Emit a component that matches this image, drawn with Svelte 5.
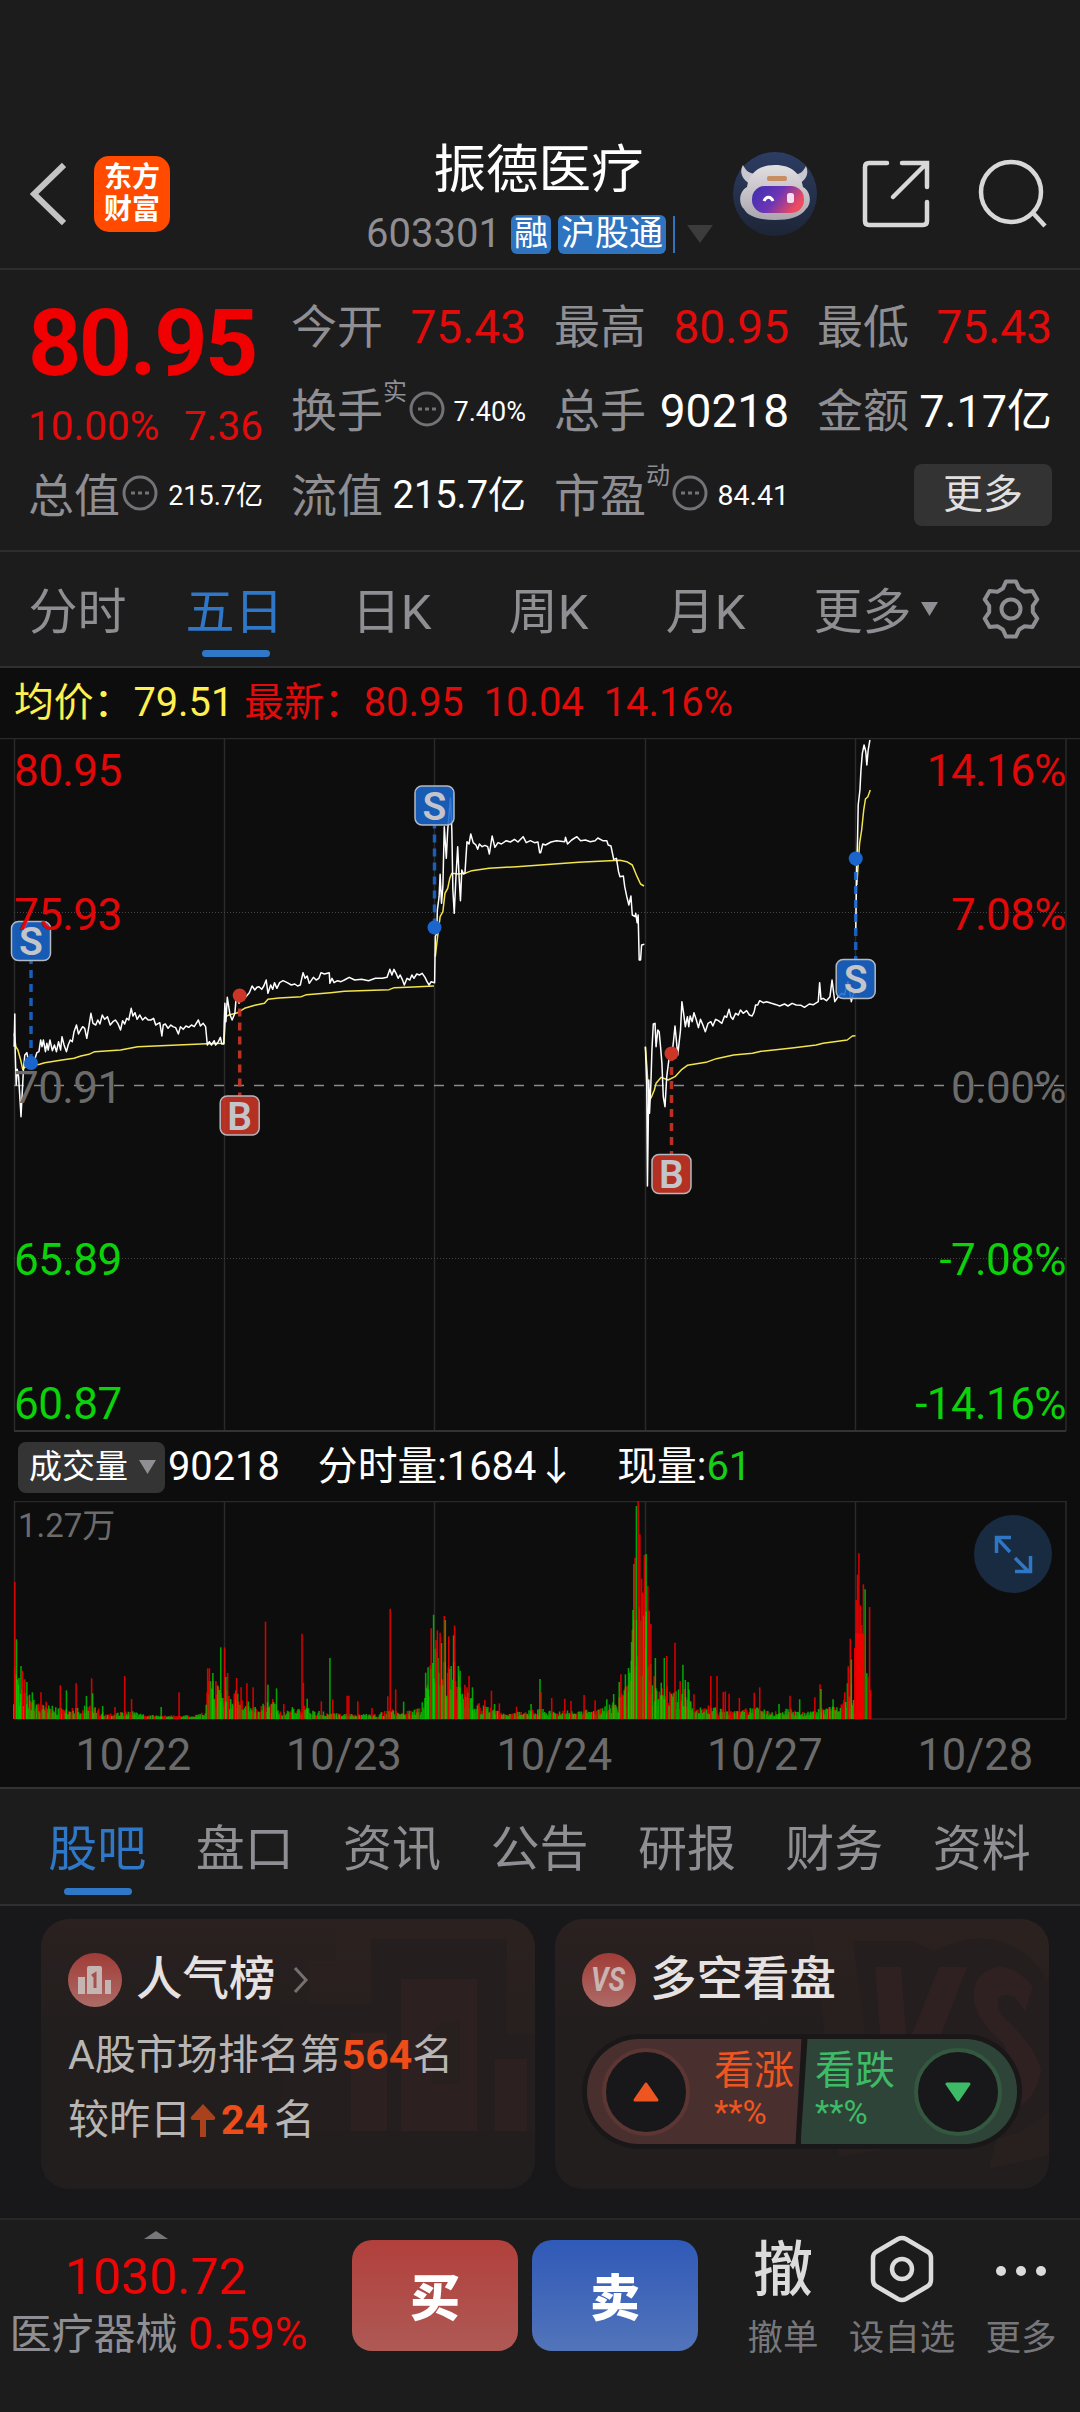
<script>
    const periods = ["分时", "五日", "日K", "周K", "月K", "更多"];
    const sections = ["股吧", "盘口", "资讯", "公告", "研报", "财务", "资料"];
    const dates = ["10/22", "10/23", "10/24", "10/27", "10/28"];

    let activePeriod = "五日";
    let activeSection = "股吧";

    // one polyline per trading session, chart units
    const priceLines = [
        "41,950 43,852 44,960 47,1065 50,1018 54,1040 61,1160 68,1020 72,975 78,968 84,1000 88,985 92,1010 98,990 102,985 107,968 113,965 118,930 122,950 126,930 132,965 136,940 140,960 145,930 152,962 158,945 164,965 170,935 176,960 180,920 186,945 193,965 198,945 204,930 210,935 215,905 222,885 228,912 234,900 240,890 246,895 252,925 258,890 264,850 270,880 278,885 284,870 290,882 297,855 304,868 312,860 320,885 328,875 335,870 342,880 350,900 356,872 362,882 368,865 374,870 381,835 386,858 392,848 398,868 406,855 414,870 422,862 430,870 438,870 446,865 452,885 460,880 464,878 470,918 474,885 480,882 488,895 496,885 502,890 510,893 518,912 524,890 532,898 540,888 548,892 556,885 564,890 576,870 582,888 590,880 597,890 602,945 608,935 614,945 622,932 626,945 634,935 640,922 644,942 650,942 651,880 653,820 656,875 660,802 668,855 674,870 682,850 686,800 694,820 700,790 706,810 714,800 724,788 732,768 740,780 746,772 752,770 760,778 766,768 773,750 778,790 786,765 792,778 797,758 804,775 812,758 822,752 834,758 846,765 856,762 864,768 872,765 880,728 886,745 892,738 898,760 910,742 918,750 926,745 932,728 942,732 956,728 958,760 964,745 970,758 980,752 990,755 1000,750 1014,742 1030,750 1050,748 1070,752 1090,745 1110,745 1124,742 1132,718 1138,735 1144,718 1150,730 1156,745 1162,735 1168,748 1174,765 1182,745 1190,750 1196,735 1202,745 1210,732 1218,735 1226,730 1234,742 1240,755 1246,765 1252,755 1262,758 1264,620 1268,610 1270,540 1275,500 1278,433 1282,520 1286,470 1290,290 1296,385 1300,300 1308,205 1312,300 1315,480 1319,550 1324,440 1329,350 1333,440 1337,512 1341,420 1346,432 1350,430 1356,335 1362,342 1367,312 1374,338 1382,345 1387,358 1392,342 1400,350 1408,346 1416,350 1421,372 1429,318 1437,352 1446,338 1456,342 1470,332 1482,336 1494,328 1504,336 1519,320 1528,338 1540,332 1552,338 1562,336 1567,368 1570,368 1576,342 1584,345 1600,336 1616,332 1640,335 1642,322 1648,342 1660,330 1675,320 1686,332 1700,330 1714,335 1728,332 1736,324 1750,332 1762,332 1766,345 1774,348 1782,388 1790,385 1796,425 1800,440 1810,438 1814,470 1820,500 1826,525 1832,498 1836,555 1844,560 1846,550 1850,578 1853,555 1856,690 1860,690 1863,645 1871,643",
        "1874,950 1878,1070 1880,1368 1884,1050 1886,1150 1890,1060 1893,960 1897,882 1902,880 1905,950 1910,900 1914,905 1918,950 1922,1000 1926,1100 1931,1130 1936,1040 1944,975 1950,985 1956,930 1960,888 1968,975 1976,900 1980,815 1985,850 1990,890 1996,860 2000,890 2004,858 2010,875 2015,848 2022,870 2028,893 2034,868 2041,885 2048,905 2056,880 2064,875 2070,888 2078,868 2086,872 2096,880 2104,858 2110,862 2117,838 2122,860 2128,868 2136,850 2144,855 2150,840 2158,850 2168,842 2176,855 2184,858 2190,845 2194,825 2200,825 2206,812 2216,818 2226,815 2240,820 2254,824 2264,828 2278,822 2288,828 2300,820 2312,825 2326,826 2336,832 2350,822 2362,824 2376,815 2380,758 2384,808 2390,805 2400,812 2410,800 2416,750 2424,815 2434,800 2444,790 2452,795 2462,755 2466,778 2472,815 2478,790 2484,790",
        "2485,600 2487,430 2490,330 2492,225 2497,180 2500,120 2504,70 2509,45 2514,65 2517,105 2521,60 2526,30",
    ];
    const averageLines = [
        "41,910 46,950 52,960 60,990 66,1018 74,1010 90,1008 115,1003 130,998 180,990 215,985 235,978 258,973 275,965 350,960 400,950 500,946 600,941 650,940 655,860 665,855 690,848 710,835 740,826 768,820 778,808 810,804 875,800 890,794 960,788 1000,784 1130,779 1145,773 1200,771 1260,768",
        "1264,680 1270,625 1278,560 1286,545 1292,490 1300,475 1306,445 1312,430 1330,432 1350,430 1370,422 1420,415 1500,410 1570,405 1680,397 1800,391 1820,395 1836,405 1850,440 1860,462 1870,468",
        "1874,950 1879,1020 1884,1116 1892,1100 1900,1080 1905,1060 1920,1042 1940,1050 1960,1040 1980,1018 1996,1006 2050,997 2080,986 2130,975 2185,970 2210,964 2300,954 2370,945 2390,940 2460,930 2475,918 2484,917",
        "2488,465 2492,400 2496,340 2502,300 2508,240 2513,207 2520,200 2527,180",
    ];

    const trades = [
        { side: "S", x: 31, box: 203, dot: 325 },
        { side: "B", x: 239.7, box: 377.5, dot: 257.5 },
        { side: "S", x: 434.5, box: 67.5, dot: 189.5 },
        { side: "B", x: 671.5, box: 436, dot: 315.5 },
        { side: "S", x: 855.7, box: 241, dot: 120.5 },
    ];

    const axis = [
        { price: "80.95", pct: "14.16%", y: 48, tone: "up" },
        { price: "75.93", pct: "7.08%", y: 192, tone: "up" },
        { price: "70.91", pct: "0.00%", y: 364.5, tone: "flat" },
        { price: "65.89", pct: "-7.08%", y: 537, tone: "down" },
        { price: "60.87", pct: "-14.16%", y: 681, tone: "down" },
    ];

    // typical volume over time, the noise is scaled by it
    const envelope = [
        [38, 170], [50, 130], [80, 80], [110, 45], [180, 32], [270, 40], [310, 12], [380, 22],
        [420, 10], [560, 8], [596, 20], [604, 120], [650, 110], [700, 75], [745, 30], [790, 60],
        [820, 18], [880, 40], [920, 22], [980, 14], [1100, 12], [1130, 35], [1160, 16], [1220, 30],
        [1240, 170], [1265, 240], [1320, 220], [1345, 90], [1400, 40], [1470, 14], [1570, 30],
        [1600, 22], [1740, 26], [1790, 55], [1825, 110], [1838, 330], [1855, 440], [1876, 330],
        [1892, 140], [1920, 100], [2000, 90], [2014, 26], [2060, 40], [2120, 22], [2200, 34],
        [2240, 18], [2290, 30], [2330, 18], [2440, 40], [2465, 130], [2474, 110], [2482, 30],
    ];
    const spikes = [
        [43, 276, "r"], [48, 448, "g"], [55, 564, "g"], [61, 528, "g"], [65, 542, "r"], [72, 568, "r"], [78, 576, "g"],
        [94, 607, "g"], [119, 607, "r"], [134, 635, "r"], [175, 586, "r"], [193, 601, "g"], [221, 580, "r"],
        [251, 618, "g"], [266, 565, "r"], [269, 610, "g"], [298, 648, "g"], [334, 651, "r"], [362, 558, "r"],
        [382, 627, "r"], [468, 651, "g"], [520, 607, "r"], [603, 535, "r"], [608, 535, "r"], [618, 549, "g"],
        [627, 573, "r"], [641, 472, "g"], [652, 472, "r"], [656, 561, "g"], [661, 549, "r"], [687, 564, "r"],
        [700, 592, "r"], [717, 580, "r"], [735, 592, "r"], [771, 395, "r"], [778, 584, "g"], [803, 595, "g"],
        [824, 642, "r"], [849, 651, "g"], [877, 431, "r"], [881, 578, "r"], [892, 626, "g"], [933, 634, "r"],
        [958, 504, "g"], [966, 628, "r"], [1008, 617, "r"], [1013, 617, "r"], [1039, 634, "r"], [1080, 654, "r"],
        [1126, 619, "r"], [1133, 356, "r"], [1149, 598, "r"], [1172, 635, "g"], [1236, 548, "g"], [1243, 532, "g"],
        [1252, 415, "r"], [1259, 374, "g"], [1266, 450, "r"], [1270, 421, "r"], [1278, 428, "r"], [1290, 378, "r"],
        [1293, 390, "g"], [1303, 439, "r"], [1317, 436, "g"], [1320, 407, "r"], [1331, 528, "g"], [1336, 542, "g"],
        [1350, 584, "r"], [1356, 592, "r"], [1362, 558, "r"], [1372, 592, "g"], [1408, 630, "r"], [1427, 602, "r"],
        [1436, 642, "g"], [1450, 640, "r"], [1500, 650, "r"], [1542, 642, "g"], [1568, 567, "g"], [1571, 606, "r"],
        [1602, 624, "r"], [1640, 626, "r"], [1658, 633, "r"], [1696, 615, "r"], [1728, 631, "r"], [1762, 628, "g"],
        [1782, 612, "g"], [1798, 576, "g"], [1803, 553, "r"], [1816, 553, "g"], [1825, 534, "g"], [1834, 456, "g"],
        [1838, 360, "g"], [1841, 222, "g"], [1844, 203, "r"], [1848, 48, "g"], [1853, 33, "r"], [1858, 133, "r"],
        [1863, 266, "r"], [1871, 195, "r"], [1876, 192, "g"], [1881, 288, "r"], [1885, 362, "r"], [1890, 402, "r"],
        [1903, 504, "g"], [1920, 578, "g"], [1929, 504, "g"], [1936, 498, "r"], [1960, 458, "r"], [1975, 573, "r"],
        [1983, 524, "g"], [1990, 570, "g"], [1998, 576, "g"], [2015, 613, "r"], [2064, 558, "r"], [2082, 558, "r"],
        [2100, 606, "r"], [2106, 604, "r"], [2117, 611, "r"], [2147, 624, "r"], [2190, 608, "r"], [2206, 592, "r"],
        [2262, 642, "g"], [2294, 617, "r"], [2322, 628, "g"], [2366, 622, "r"], [2381, 583, "r"], [2384, 597, "g"],
        [2419, 628, "g"], [2463, 529, "r"], [2469, 446, "r"], [2472, 508, "g"], [2482, 474, "r"], [2486, 330, "r"],
        [2490, 254, "r"], [2494, 190, "r"], [2498, 346, "r"], [2502, 405, "r"], [2507, 283, "r"], [2512, 298, "g"],
        [2517, 550, "g"], [2520, 560, "r"], [2525, 351, "r"], [2528, 600, "r"],
    ];

    function typicalVolume(x) {
        for (let i = 1; i < envelope.length; i++) {
            const [x0, h0] = envelope[i - 1];
            const [x1, h1] = envelope[i];
            if (x <= x1) return h0 + ((h1 - h0) * (x - x0)) / (x1 - x0);
        }
        return 0;
    }

    function buildVolume() {
        const bars = { r: "", g: "" };
        let seed = 41;
        const random = () => {
            seed = (seed * 16807) % 2147483647;
            return seed / 2147483647;
        };
        for (let x = 40; x < 2482; x += 2.54) {
            const height = typicalVolume(x) * (0.25 + random() * 0.75) + 3;
            bars[random() > 0.52 ? "r" : "g"] += `M${x.toFixed(1)} 687v${-height.toFixed(1)}`;
        }
        return bars;
    }

    function gearPath(cx, cy) {
        const points = [];
        for (let i = 0; i < 6; i++) {
            for (const [offset, r] of [[-22, 22], [-10, 28], [10, 28], [22, 22]]) {
                const a = ((i * 60 - 90 + offset) * Math.PI) / 180;
                points.push(`${(cx + r * Math.cos(a)).toFixed(1)} ${(cy + r * Math.sin(a)).toFixed(1)}`);
            }
        }
        return `M${points.join("L")}Z`;
    }

    const volume = buildVolume();
</script>

{#snippet info()}
    <svg class="info" viewBox="0 0 36 36">
        <circle cx="18" cy="18" r="16" />
        <path d="M9 18h4M16 18h4M23 18h4" />
    </svg>
{/snippet}

<main>
    <header>
        <div class="side left">
            <svg class="back" viewBox="0 0 36 64"><path d="M34 3 4 32l30 29" /></svg>
            <div class="logo"><span>东方</span><span>财富</span></div>
        </div>
        <div class="title">
            <h1>振德医疗</h1>
            <div class="code">
                <span>603301</span>
                <b>融</b>
                <b>沪股通</b>
                <i></i>
                <svg viewBox="0 0 26 18"><path d="M0 0h26L13 18z" /></svg>
            </div>
        </div>
        <div class="side right">
            <svg class="robot" viewBox="0 0 84 84">
                <defs>
                    <linearGradient id="visor" x1="0" x2="1" y1="0" y2=".4">
                        <stop offset="0" stop-color="#3a2fb0" />
                        <stop offset=".55" stop-color="#6d35b5" />
                        <stop offset="1" stop-color="#ee4a60" />
                    </linearGradient>
                    <linearGradient id="space" x1="0" x2="0" y1="0" y2="1">
                        <stop offset="0" stop-color="#2c3d63" />
                        <stop offset="1" stop-color="#1d2536" />
                    </linearGradient>
                    <linearGradient id="fur" x1="0" x2="0" y1="0" y2="1">
                        <stop offset="0" stop-color="#e2dfe2" />
                        <stop offset="1" stop-color="#aaa5ae" />
                    </linearGradient>
                </defs>
                <circle cx="42" cy="42" r="42" fill="url(#space)" />
                <path d="M17 32C9 27 6 20 10 13c3 6 6 8 12 9zM66 32c8-5 10-11 7-18-3 6-6 8-12 9z" fill="#c9c7cf" />
                <path d="M42 13c17 0 26 9 28 22 8 4 9 17 3 22-5 8-17 11-31 11s-27-3-31-11c-6-5-5-18 3-22 2-13 11-22 28-22z" fill="url(#fur)" />
                <rect x="19" y="34" width="52" height="27" rx="13" fill="url(#visor)" />
                <rect x="34" y="24" width="20" height="5" rx="2" fill="#c98d62" />
                <path d="M31 49c2-5 7-5 9 0" fill="none" stroke="#fff" stroke-width="3" />
                <rect x="54" y="41" width="7" height="10" rx="2.5" fill="#f3dff0" />
            </svg>
            <svg class="share" viewBox="0 0 68 68">
                <path d="M25 3H7q-4 0-4 4v54q0 4 4 4h54q4 0 4-4V42M40 3h25v24M64 4 31 37" />
            </svg>
            <svg class="search" viewBox="0 0 70 70">
                <circle cx="33" cy="33" r="30" />
                <path d="m55 54 12 13" />
            </svg>
        </div>
    </header>

    <section class="quote">
        <div class="price">
            <strong>80.95</strong>
            <p><span>10.00%</span><span>7.36</span></p>
        </div>
        <div class="cell"><label>今开</label><em class="red">75.43</em></div>
        <div class="cell"><label>最高</label><em class="red">80.95</em></div>
        <div class="cell"><label>最低</label><em class="red">75.43</em></div>
        <div class="cell"><label>换手</label><sup>实</sup>{@render info()}<em class="small">7.40%</em></div>
        <div class="cell"><label>总手</label><em>90218</em></div>
        <div class="cell"><label>金额</label><em class="amount">7.17亿</em></div>
        <div class="cell"><label>总值</label>{@render info()}<em class="small">215.7亿</em></div>
        <div class="cell"><label>流值</label><em class="medium">215.7亿</em></div>
        <div class="cell"><label>市盈</label><sup>动</sup>{@render info()}<em class="small ratio">84.41</em></div>
        <div class="cell"><button class="more">更多</button></div>
    </section>

    <nav class="periods">
        {#each periods as period, i}
            <button class:active={period == activePeriod} on:click={() => (activePeriod = period)}>
                {period}
                {#if i == periods.length - 1}
                    <svg class="caret" viewBox="0 0 17 14"><path d="M0 0h17L8.500 14z" /></svg>
                {/if}
            </button>
        {/each}
        <svg class="gear" viewBox="0 0 60 60">
            <path d={gearPath(30, 30)} />
            <circle cx="30" cy="30" r="9.500" />
        </svg>
    </nav>

    <section class="charts">
        <div class="legend">
            <span class="yellow">均价：79.51</span>
            <span>最新：80.95</span>
            <span>10.04</span>
            <span>14.16%</span>
        </div>

        <svg class="priceChart" viewBox="0 0 1080 695">
            <g class="grid">
                <path d="M0 .5H1080" />
                <path d="M14.500 0V693M224.500 0V693M434.500 0V693M645.500 0V693M855.500 0V693M1066 0V693" />
                <path class="dotted" d="M14 174.500H1066M14 520.500H1066" />
                <path class="bottom" d="M14 693H1066" />
            </g>
            <path class="zero" d="M14 347.500H1066" />
            <svg x="0" y="0" width="1080" height="693" viewBox="0 24 3136 2079" preserveAspectRatio="none">
                {#each averageLines as points}
                    <polyline class="average" {points} />
                {/each}
                {#each priceLines as points}
                    <polyline class="last" {points} />
                {/each}
            </svg>
            {#each trades as trade}
                <g class="trade {trade.side}">
                    <line x1={trade.x} x2={trade.x} y1={trade.box + (trade.box < trade.dot ? 20 : -20)} y2={trade.dot} />
                    <circle cx={trade.x} cy={trade.dot} r="7" />
                    <rect x={trade.x - 19.5} y={trade.box - 19.5} width="39" height="39" rx="7" />
                    <text x={trade.x} y={trade.box + 14}>{trade.side}</text>
                </g>
            {/each}
            {#each axis as row}
                <text class="tick {row.tone}" x="14" y={row.y}>{row.price}</text>
                <text class="tick end {row.tone}" x="1066" y={row.y}>{row.pct}</text>
            {/each}
        </svg>

        <div class="legend volumeLegend">
            <button class="pill">
                成交量
                <svg viewBox="0 0 17 14"><path d="M0 0h17L8.500 14z" /></svg>
            </button>
            <span>90218</span>
            <span class="minute">分时量:1684↓</span>
            <span>现量:<i>61</i></span>
        </div>

        <svg class="volumeChart" viewBox="0 0 1080 220">
            <path class="frame" d="M14 .5H1066M14.500 0V218M224.500 0V218M434.500 0V218M645.500 0V218M855.500 0V218M1066 0V218M14 218H1066" />
            <svg x="0" y="0" width="1080" height="218" viewBox="0 33 3136 654" preserveAspectRatio="none">
                <path class="bar r" d={volume.r} />
                <path class="bar g" d={volume.g} />
                {#each spikes as [x, top, tone]}
                    <path class="bar {tone}" d="M{x} 687V{top}" />
                {/each}
                <rect x="2484" y="430" width="26" height="257" fill="#ee0000" />
            </svg>
            <text x="18" y="36">1.27万</text>
            <circle class="expand" cx="1013" cy="53" r="39" />
            <path class="arrows" d="M1011 36.500H996.500V52M997 37l13 14M1015 57l14 14M1030.500 55V70.500H1015" />
        </svg>

        <div class="dates">
            {#each dates as date}
                <span>{date}</span>
            {/each}
        </div>
    </section>

    <nav class="sections">
        {#each sections as section}
            <button class:active={section == activeSection} on:click={() => (activeSection = section)}>{section}</button>
        {/each}
    </nav>

    <section class="cards">
        <article>
            <svg class="ghost" viewBox="0 0 494 270">
                <path d="M295 0H494V212H240V85h28V42h27z" fill="#2c2220" opacity=".5" />
                <path d="M330 20h136v95h28v97H240V85h90z" fill="#251e1e" />
                <path d="M360 60h76v152h-76zM310 114h36v98h-36zM454 140h32v72h-32z" fill="#2c2020" />
                <path d="m391 112 12-9h16v62h-28z" fill="#281f1f" />
            </svg>
            <h2>
                <svg class="badge" viewBox="0 0 54 54">
                    <defs>
                        <linearGradient id="badge" x1="0" x2="0" y1="0" y2="1">
                            <stop offset="0" stop-color="#a03c37" />
                            <stop offset="1" stop-color="#ad6b67" />
                        </linearGradient>
                    </defs>
                    <circle cx="27" cy="27" r="27" fill="url(#badge)" />
                    <path d="M10 24h7v17h-7zM19 15q0-2 2-2h11q2 0 2 2v26H19zM37 27h6v14h-6z" fill="#c4b4b2" />
                    <path d="m24 23 3-2v14" fill="none" stroke="#a4504b" stroke-width="3" />
                </svg>
                人气榜
                <svg class="chevron" viewBox="0 0 16 28"><path d="m2 2 11 12L2 26" /></svg>
            </h2>
            <p>A股市场排名第<b>564</b>名</p>
            <p>
                较昨日<svg class="rise" viewBox="0 0 26 34"><path d="M13 0 25 13q1 3-2 3H16v17h-6V16H3q-3 0-2-3z" /></svg><b>24</b>
                名
            </p>
        </article>
        <article>
            <svg class="ghost" viewBox="0 0 494 270">
                <path d="M256 0H494V236l-60 14 10-40-160 28z" fill="#2c2220" opacity=".4" />
                <path d="M298 22h60l20 10q60-30 100 10l16 20v130q-30 30-80 30h-90z" fill="#251e1e" />
                <path d="M320 48h26l6 80 32-80h28l-50 130h-32zM478 68q-28-34-54-10-18 30 24 66 10 16-12 34-16 12-30 2v28q70 20 80-36-4-24-40-56-10-26 14-18l10 14z" fill="#2f2121" />
            </svg>
            <h2>
                <svg class="badge" viewBox="0 0 54 54">
                    <circle cx="27" cy="27" r="27" fill="url(#badge)" />
                    <text x="26" y="38" textLength="34" lengthAdjust="spacingAndGlyphs">VS</text>
                </svg>
                多空看盘
            </h2>
            <div class="vote">
                <div class="bull">
                    <span class="knob"><svg viewBox="0 0 26 20"><path d="M13 2 24 18H2z" /></svg></span>
                    <div><span>看涨</span><small>**%</small></div>
                </div>
                <div class="bear">
                    <div><span>看跌</span><small>**%</small></div>
                    <span class="knob"><svg viewBox="0 0 26 20"><path d="M2 2h22L13 18z" /></svg></span>
                </div>
            </div>
        </article>
    </section>

    <footer>
        <div class="index">
            <svg viewBox="0 0 24 8"><path d="M12 0 24 8H0z" /></svg>
            <strong>1030.72</strong>
            <p>医疗器械 <span>0.59%</span></p>
        </div>
        <button class="trade-btn buy">买</button>
        <button class="trade-btn sell">卖</button>
        <div class="action cancel"><b>撤</b><span>撤单</span></div>
        <div class="action favourite">
            <svg viewBox="0 0 64 68">
                <path d="M28 4q4-2 8 0l22 13q3 2 3 6v22q0 4-3 6L36 64q-4 2-8 0L6 51q-3-2-3-6V23q0-4 3-6z" />
                <circle cx="32" cy="34" r="10" />
            </svg>
            <span>设自选</span>
        </div>
        <div class="action">
            <svg class="dots" viewBox="0 0 64 68">
                <circle cx="12" cy="36" r="5" /><circle cx="32" cy="36" r="5" /><circle cx="52" cy="36" r="5" />
            </svg>
            <span>更多</span>
        </div>
    </footer>
</main>

<style>
    :global(body) {
        background: #1c1c1c;
    }
    main {
        display: flex;
        flex-direction: column;
        width: 1080px;
        height: 2412px;
        overflow: hidden;
        background: #1c1c1c;
        color: #fff;
        font-family: Roboto, "Noto Sans CJK SC", sans-serif;
        line-height: 1.2;
    }
    main * {
        box-sizing: border-box;
    }
    svg {
        display: block;
        flex: none;
    }
    button {
        padding: 0;
        border: 0;
        background: none;
        color: inherit;
        font: inherit;
    }
    h1,
    h2,
    p {
        margin: 0;
        font-weight: 400;
    }
    em,
    i {
        font-style: normal;
    }

    /* header */
    header {
        display: flex;
        justify-content: space-between;
        height: 270px;
        padding: 134px 32px 0 30px;
        border-bottom: 2px solid #2d2d2d;
    }
    .side {
        display: flex;
        align-items: center;
        width: 336px;
        height: 120px;
    }
    .right {
        justify-content: flex-end;
    }
    .back {
        width: 36px;
        height: 64px;
        fill: none;
        stroke: #c4c4c4;
        stroke-width: 6;
    }
    .logo {
        display: flex;
        flex-direction: column;
        justify-content: center;
        width: 76px;
        height: 76px;
        margin-left: 28px;
        border-radius: 15px;
        background: #ff4a00;
        font-size: 28px;
        font-weight: 700;
        line-height: 32px;
        text-align: center;
    }
    .title {
        display: flex;
        flex: 1;
        flex-direction: column;
        align-items: center;
        padding-top: 3px;
    }
    h1 {
        margin-left: -1px;
        font-size: 52.5px;
        line-height: 66px;
    }
    .code {
        display: flex;
        align-items: center;
        gap: 7px;
        margin: 11px 0 0 1px;
        color: #8e8e93;
        font-size: 40px;
        line-height: 40px;
        white-space: nowrap;
    }
    .code span {
        margin-right: 3px;
    }
    .code b {
        height: 39px;
        padding: 0 3px;
        border-radius: 6px;
        background: #2f74c0;
        color: #fff;
        font-size: 34px;
        font-weight: 400;
        line-height: 37px;
    }
    .code i {
        width: 2px;
        height: 37px;
        background: #2f74c0;
    }
    .code svg {
        width: 26px;
        margin-left: 5px;
        fill: #3c3c3c;
    }
    .robot {
        width: 84px;
    }
    .share {
        width: 68px;
        margin-left: 45px;
        fill: none;
        stroke: #d8d8d8;
        stroke-width: 4.500;
        stroke-linecap: round;
    }
    .search {
        width: 70px;
        margin-left: 48px;
        fill: none;
        stroke: #d8d8d8;
        stroke-width: 4.500;
    }

    /* quote */
    .quote {
        display: grid;
        grid-template-columns: repeat(4, 1fr);
        grid-template-rows: repeat(3, 84.5px);
        column-gap: 28px;
        height: 280px;
        padding: 15px 28px 0;
    }
    .price {
        grid-row: span 2;
        color: #e00b0b;
    }
    .price strong {
        display: block;
        height: 112px;
        color: #f00000;
        font-size: 93px;
        font-weight: 700;
        line-height: 117px;
        letter-spacing: -2.5px;
    }
    .price p {
        display: flex;
        justify-content: space-between;
        font-size: 40.5px;
        line-height: 58px;
    }
    .cell {
        display: flex;
        align-items: center;
        font-size: 46px;
        white-space: nowrap;
    }
    .cell label {
        color: #8e8e93;
    }
    .cell em {
        margin-left: auto;
    }
    .cell .red {
        color: #e00b0b;
    }
    .cell .amount {
        font-size: 45px;
    }
    .cell .medium {
        font-size: 38px;
    }
    .cell .small {
        font-size: 27px;
    }
    .cell .ratio {
        font-size: 28.5px;
    }
    .cell sup {
        align-self: flex-start;
        margin-top: 2px;
        color: #8e8e93;
        font-size: 24px;
        line-height: 40px;
    }
    .info {
        width: 36px;
        margin: -6px 0 0 2px;
        fill: none;
        stroke: #737377;
        stroke-width: 3;
    }
    .more {
        width: 138px;
        height: 62px;
        margin: -3px 0 0 auto;
        border-radius: 8px;
        background: #333;
        color: #e0e0e0;
        font-size: 40px;
    }

    /* tabs */
    nav {
        display: flex;
        color: #8e8e93;
        font-size: 49px;
    }
    nav button {
        position: relative;
        line-height: 72px;
    }
    nav .active {
        color: #2f78c8;
    }
    nav .active::after {
        content: "";
        position: absolute;
        bottom: 9px;
        left: 50%;
        width: 68px;
        height: 7px;
        margin-left: -34px;
        border-radius: 4px;
        background: #2f78c8;
    }
    .periods {
        align-items: stretch;
        height: 118px;
        border-top: 2px solid #2d2d2d;
        border-bottom: 2px solid #303030;
    }
    .periods button {
        width: 157px;
        padding: 8px 2px 0 0;
    }
    .caret {
        position: absolute;
        top: 50px;
        right: 4px;
        width: 17px;
        fill: #8e8e93;
    }
    .gear {
        width: 60px;
        height: 60px;
        margin: 27px 0 0 39px;
        fill: none;
        stroke: #8e8e93;
        stroke-width: 4;
        stroke-linejoin: round;
    }
    .sections {
        height: 119px;
        padding: 0 24px;
        border-top: 2px solid #333;
        border-bottom: 2px solid #303030;
    }
    .sections button {
        flex: 1;
        padding: 7px 1px 0 0;
    }

    /* charts */
    .charts {
        height: 1119px;
        background: #0d0d0d;
    }
    .legend {
        display: flex;
        align-items: center;
        gap: 20px;
        height: 70px;
        padding-left: 14px;
        color: #e00b0b;
        font-size: 39.8px;
        white-space: nowrap;
    }
    .legend .yellow {
        margin-right: -9px;
        color: #fff050;
    }
    .priceChart {
        width: 1080px;
        height: 695px;
    }
    .grid path,
    .frame {
        fill: none;
        stroke: #2a2a2a;
        stroke-width: 1.500;
    }
    .grid .dotted {
        stroke-width: 1;
        stroke-dasharray: 1 2;
        stroke: #444;
    }
    .grid .bottom {
        stroke: #333;
        stroke-width: 2;
    }
    .zero {
        stroke: #8a8a8a;
        stroke-width: 1.600;
        stroke-dasharray: 10 10;
    }
    polyline {
        fill: none;
        stroke-width: 1.500;
        stroke-linejoin: round;
        vector-effect: non-scaling-stroke;
    }
    .average {
        stroke: #f2e44c;
    }
    .last {
        stroke: #fff;
    }
    .trade {
        --tone: #1a66cc;
    }
    .trade.B {
        --tone: #cc3626;
    }
    .trade line {
        stroke: var(--tone);
        stroke-width: 3.500;
        stroke-dasharray: 8 6;
        stroke-dashoffset: 5;
        opacity: 0.9;
    }
    .trade circle {
        fill: var(--tone);
    }
    .trade rect {
        fill: var(--tone);
        fill-opacity: 0.88;
        stroke: #b4b8bf;
        stroke-width: 1.500;
    }
    .trade text {
        fill: #c3c5ca;
        font-size: 39px;
        font-weight: 600;
        text-anchor: middle;
    }
    .tick {
        font-size: 44px;
        letter-spacing: -0.6px;
        fill: #6b6b6b;
    }
    .tick.end {
        text-anchor: end;
    }
    .tick.up {
        fill: #e00808;
    }
    .tick.down {
        fill: #0bd20b;
    }
    .volumeLegend {
        gap: 0;
        height: 68px;
        padding-left: 18px;
        color: #fff;
    }
    .pill {
        display: flex;
        align-items: center;
        gap: 11px;
        width: 147px;
        height: 51px;
        margin-right: 3px;
        padding-left: 11px;
        border-radius: 8px;
        background: #343434;
        font-size: 33px;
    }
    .pill svg {
        width: 17px;
        fill: #8e8e93;
    }
    .minute {
        margin: 0 41px 0 38px;
    }
    .legend i {
        color: #18cf18;
    }
    .volumeChart {
        width: 1080px;
        height: 220px;
    }
    .bar {
        stroke-width: 4.500;
    }
    .bar.r {
        stroke: #ee0000;
        opacity: 0.9;
    }
    .bar.g {
        stroke: #00d800;
        opacity: 0.75;
    }
    .volumeChart text {
        fill: #6b6b6b;
        font-size: 33px;
    }
    .expand {
        fill: #182b41;
    }
    .arrows {
        fill: none;
        stroke: #2f76c4;
        stroke-width: 3.500;
    }
    .dates {
        display: flex;
        padding-left: 28px;
        color: #6b6b6b;
        font-size: 43.5px;
        line-height: 70px;
    }
    .dates span {
        flex: none;
        width: 210.5px;
        text-align: center;
    }

    /* cards */
    .cards {
        display: flex;
        gap: 20px;
        height: 312px;
        padding: 13px 31px 0 41px;
        background: #18181a;
    }
    article {
        position: relative;
        width: 494px;
        height: 270px;
        padding: 32px 28px 0 27px;
        overflow: hidden;
        border-radius: 28px;
        background: linear-gradient(#2a2120, #231e1e 40%, #231e1e);
        color: #b8b5b5;
        font-size: 41px;
    }
    .ghost {
        position: absolute;
        inset: 0;
    }
    h2,
    article p,
    .vote {
        position: relative;
    }
    h2 {
        display: flex;
        align-items: center;
        height: 58px;
        margin-bottom: 14px;
        color: #e6e2e2;
        font-size: 46.5px;
        font-weight: 500;
    }
    .badge {
        width: 54px;
        margin-right: 14px;
    }
    .badge text {
        fill: #c9b4b2;
        font-size: 33px;
        font-style: italic;
        font-weight: 700;
        text-anchor: middle;
    }
    .chevron {
        width: 16px;
        margin-left: 17px;
        fill: none;
        stroke: #77706f;
        stroke-width: 3;
    }
    article p {
        display: flex;
        align-items: center;
        height: 65px;
        white-space: nowrap;
    }
    article b {
        margin-left: 1px;
        color: #ee4c18;
        font-weight: 700;
    }
    .rise {
        width: 26px;
        margin: 0 4px 0 -1px;
        fill: #a8421c;
    }
    .rise + b {
        margin-right: 6px;
    }
    .vote {
        display: flex;
        width: 440px;
        height: 115px;
        margin-top: 25px;
        padding: 5px;
        overflow: hidden;
        border-radius: 58px;
        background: #1a1718;
        font-size: 40px;
    }
    .bull,
    .bear {
        display: flex;
        align-items: center;
        width: 215px;
        height: 105px;
        clip-path: polygon(0 0, 100% 0, calc(100% - 6px) 100%, 0 100%);
        border-radius: 52px 0 0 52px;
        background: #49302f;
        color: #ee5520;
    }
    .bear {
        justify-content: flex-end;
        width: 217px;
        margin-left: -1px;
        clip-path: polygon(7px 0, 100% 0, 100% 100%, 0 100%);
        border-radius: 0 52px 52px 0;
        background: #2f4438;
        color: #3dbb66;
    }
    .vote div div {
        display: flex;
        flex-direction: column;
        padding-bottom: 5px;
    }
    .vote div span {
        line-height: 48px;
    }
    .vote small {
        font-size: 33px;
        line-height: 36px;
    }
    .knob {
        display: flex;
        align-items: center;
        justify-content: center;
        width: 88px;
        height: 88px;
        margin: 0 24px 0 15px;
        border: 4px solid #5c3633;
        border-radius: 50%;
        background: #18181a;
    }
    .bear .knob {
        margin: 0 15px 0 19px;
        border-color: #33583f;
    }
    .knob svg {
        width: 26px;
        fill: currentColor;
        stroke: currentColor;
        stroke-width: 3;
        stroke-linejoin: round;
    }

    /* footer */
    footer {
        display: flex;
        height: 194px;
        border-top: 2px solid #27272a;
    }
    .index {
        display: flex;
        flex-direction: column;
        align-items: center;
        width: 312px;
        margin-right: 40px;
        padding-top: 11px;
        color: #ee0505;
        white-space: nowrap;
    }
    .index svg {
        width: 24px;
        fill: #77777a;
    }
    .index strong {
        font-size: 50px;
        font-weight: 400;
        line-height: 76px;
    }
    .index p {
        padding-left: 5px;
        color: #8e8e93;
        font-size: 42px;
        line-height: 38px;
    }
    .index span {
        color: #ee0505;
        font-size: 44.5px;
    }
    .trade-btn {
        width: 166px;
        height: 111px;
        margin: 20px 14px 0 0;
        border-radius: 20px;
        font-size: 50px;
        font-weight: 900;
        line-height: 119px;
    }
    .buy {
        background: linear-gradient(#b2403c, #ae5955);
    }
    .sell {
        background: linear-gradient(#305ab8, #5274ba);
    }
    .action {
        display: flex;
        flex-direction: column;
        align-items: center;
        width: 70px;
        margin-left: 31px;
        padding-top: 15px;
        color: #77777b;
        font-size: 35.5px;
        white-space: nowrap;
    }
    .action.cancel {
        margin-left: 36px;
    }
    .action.favourite {
        width: 106px;
    }
    .action b {
        height: 68px;
        color: #dcdcdc;
        font-size: 60px;
        font-weight: 500;
        line-height: 72px;
    }
    .action svg {
        width: 64px;
        height: 68px;
        fill: none;
        stroke: #dcdcdc;
        stroke-width: 4.500;
    }
    .action .dots {
        fill: #dcdcdc;
        stroke: none;
    }
    .action span {
        margin-top: 15px;
        line-height: 40px;
    }
</style>
